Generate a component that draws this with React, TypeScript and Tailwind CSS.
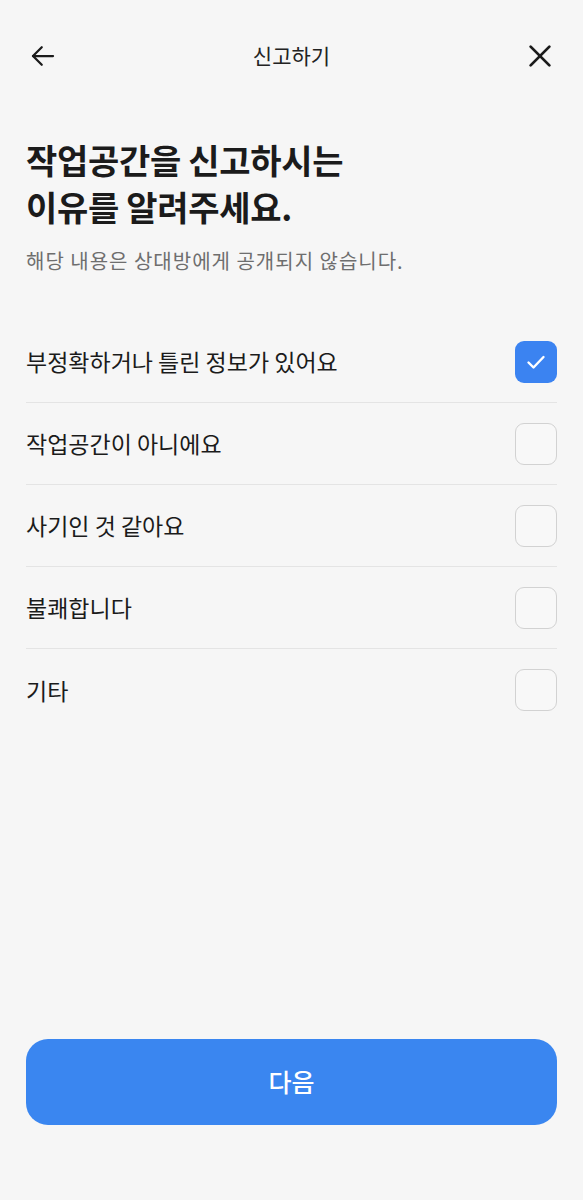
import React from "react";

const items = [
  { label: "부정확하거나 틀린 정보가 있어요", checked: true },
  { label: "작업공간이 아니에요", checked: false },
  { label: "사기인 것 같아요", checked: false },
  { label: "불쾌합니다", checked: false },
  { label: "기타", checked: false },
];

export default function App() {
  return (
    <div
      className="w-[583px] h-[1200px] bg-[#f6f6f6] text-[#1b1b1b] flex flex-col"
      style={{ fontFamily: '"Noto Sans CJK KR", "Noto Sans", sans-serif' }}
    >
      <div className="h-[112px] flex items-center justify-between px-[28px]">
        <svg width="30" height="30" viewBox="0 0 24 24" fill="none" stroke="#1b1b1b" strokeWidth="1.8" strokeLinecap="round" strokeLinejoin="round">
          <path d="M20 12H4" />
          <path d="M11 5l-7 7 7 7" />
        </svg>
        <div className="text-[21px] text-[#222]">신고하기</div>
        <svg width="30" height="30" viewBox="0 0 24 24" fill="none" stroke="#1b1b1b" strokeWidth="2.2" strokeLinecap="round">
          <path d="M4.5 4.5l15 15" />
          <path d="M19.5 4.5l-15 15" />
        </svg>
      </div>
      <div className="px-[26px] pt-[24px]">
        <h1 className="text-[34px] font-bold leading-[47px] tracking-[-0.3px]">
          작업공간을 신고하시는
          <br />
          이유를 알려주세요.
        </h1>
        <p className="mt-[18px] text-[20px] leading-[26px] tracking-[1px] text-[#6e6e6e]">해당 내용은 상대방에게 공개되지 않습니다.</p>
      </div>
      <div className="mt-[47px] px-[26px] flex flex-col">
        {items.map((it, i) => (
          <div
            key={i}
            className={`h-[82px] flex items-center justify-between ${i < items.length - 1 ? "border-b border-[#e4e4e4]" : ""}`}
          >
            <span className="text-[23px]">{it.label}</span>
            {it.checked ? (
              <div className="w-[42px] h-[42px] rounded-[9px] bg-[#3b83f1] flex items-center justify-center">
                <svg width="24" height="24" viewBox="0 0 24 24" fill="none" stroke="#fff" strokeWidth="2.4" strokeLinecap="round" strokeLinejoin="round">
                  <path d="M4.5 12.5l5 5 10-10.5" />
                </svg>
              </div>
            ) : (
              <div className="w-[42px] h-[42px] rounded-[9px] border-[1.5px] border-[#d2d2d2] bg-[#f8f8f8]" />
            )}
          </div>
        ))}
      </div>
      <div className="flex-1" />
      <div className="px-[26px] pb-[75px]">
        <button className="w-full h-[86px] rounded-[22px] bg-[#3a86f0] text-white text-[25px] font-medium">다음</button>
      </div>
    </div>
  );
}
